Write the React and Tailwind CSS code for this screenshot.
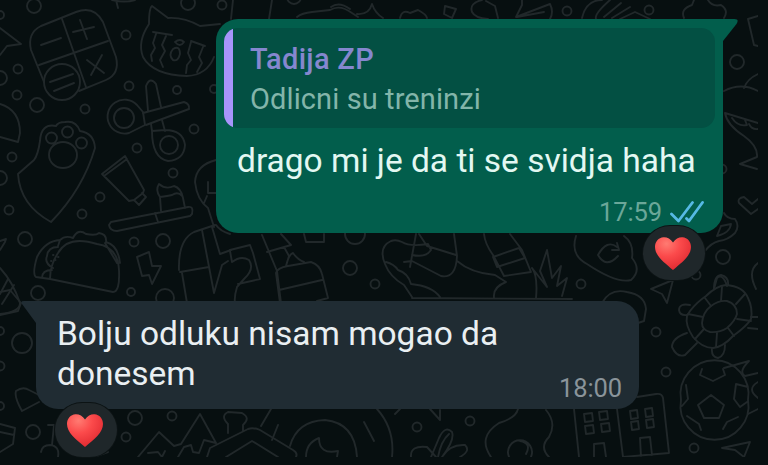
const DOTS = [
  [34, 6, 7], [0, 15, 4], [126, 35, 4.5], [188, 3, 7], [18, 69, 4.5], [0, 78, 7],
  [17, 95, 4.5], [37, 105, 7], [85, 109, 4.5], [129, 86, 4.5], [177, 90, 4], [194, 129, 4.5],
  [137, 148, 4.5], [214, 89, 4], [12, 157, 4.5], [0, 178, 7], [100, 197, 4.5], [9, 210, 4.5],
  [82, 214, 4.5], [173, 173, 4.5], [25, 239, 7], [134, 242, 4.5], [163, 241, 7], [38, 293, 7],
  [131, 292, 4], [165, 298, 9], [22, 343, 10], [0, 331, 4], [0, 366, 4.5], [0, 406, 4],
  [33, 432, 7], [135, 418, 7], [172, 416, 4.5], [126, 437, 4.5], [222, 5, 4.5], [294, -3, 7],
  [567, 11, 4.5], [649, 10, 4.5], [737, 62, 7], [355, 234, 10], [350, 268, 7], [375, 284, 4.5],
  [581, 284, 4.5], [723, 257, 7], [696, 275, 4.5], [656, 332, 4.5],
  [666, 372, 4.5], [694, 448, 4.5], [470, 421, 4.5], [417, 427, 4.5], [722, 169, 4.5],
];

const DOODLES = [
  // calculator
  "M41 26L76 12Q94 5 103 22L116 57Q120 74 106 80L79 91M44 82L31 50Q27 33 41 26M62 19L86 87M39 65L108 41M41 45L61 38M73 32L94 27M80 20L87 39M87 60L104 73M102 55L91 75",
  "M44 82A18 18 0 1 0 80 82A18 18 0 1 0 44 82M50 82L73 74M54 91L74 83",
  // cat
  "M220 24L200 26Q184 17 168 18L152 6Q149 8 149 24Q137 42 143 57Q153 75 187 76Q207 75 214 57M153 32L172 35M156 34L153 43L155 48L151 55L152 61M166 36L162 45L165 51L160 60L163 67M191 41L205 46M191 42L188 53L191 60L187 65L186 73M203 47L199 57L202 63L197 72M175 42Q180 38 184 42Q180 48 175 42M173 49Q180 45 180 54Q178 62 173 60Q168 55 173 49",
  // scissors
  "M143 112L145 125L129 133A17 17 0 1 1 137 105ZM114 118A10 10 0 1 0 134 118A10 10 0 1 0 114 118",
  "M143 113L184 102Q190 104 189 109L146 125M148 111L146 86Q150 76 156 84L161 107M151 124L152 131M162 120L165 131M152 131L165 130Q183 130 185 145Q184 160 168 161Q152 158 152 131M160 145A9 9 0 1 0 178 145A9 9 0 1 0 160 145",
  // paw
  "M34 160L18 174Q20 205 51 222Q83 189 95 148Q94 133 80 131Q76 120 65 122Q58 122 56 126Q41 123 40 141Q38 155 34 160M46 138A5 5 0 1 0 57 138A5 5 0 1 0 46 138M62 132A5.500 5.500 0 1 0 73 132A5.500 5.500 0 1 0 62 132M76 143A5.500 5.500 0 1 0 87 143A5.500 5.500 0 1 0 76 143M49 155A14 13 0 1 0 77 155A14 13 0 1 0 49 155",
  "M0 28L21 44L7 46L0 55M0 104Q20 110 20 133L18 142L0 137",
  // toothpaste and brush
  "M102 174L125 156L144 190L143 193L134 200L129 201Z M104 176L127 159M134 200L139 205L146 197L142 193M111 222L188 207Q194 206 192 214L190 216L117 231Q110 231 109 225Z M155 213L158 222M161 211L160 197Q155 190 159 184Q166 190 174 186Q181 188 183 198L185 208M160 197Q168 196 172 195Q178 191 182 196",
  // taco
  "M50 279L113 292Q120 292 119 270Q118 247 97 244Q68 235 58 253Q50 265 50 279L36 277Q32 274 37 257Q45 241 60 240Q65 235 73 238Q78 228 86 234Q96 236 99 233Q107 234 106 242Q118 245 120 263M60 240L58 246M105 243L117 263M58 247Q48 247 47 256Q44 263 53 268M42 278Q42 270 52 270",
  "M53 255h.5M55 260h.5M58 257h.5M51 261h.5",
  // lightning
  "M137 257L149 252L152 266L161 266L152 284L149 275L142 276Z",
  "M0 241L6 239L5 242L0 250M0 268Q13 282 20 303Q20 312 0 314M0 294L8 279M2 304L14 285",
  // popsicle and drinks
  "M216 160Q196 165 195 182Q197 200 208 208L214 227M208 182L208 193L216 193M204 203L207 196M179 270Q178 240 194 232L215 225M180 272L209 267M182 273L187 303M202 230L214 293L222 265L228 261M212 227L220 254L231 250",
  "M216 225Q220 231 230 234M230 250L250 245L253 253L260 279L238 284M230 251L232 262Q241 255 249 260Q255 269 244 279L237 287Q234 297 235 303M262 235L277 271L281 303M281 234L291 245L267 252M284 247L289 256L286 266M280 303L276 273Q277 268 288 266L311 262Q320 265 322 274L328 298L317 301M279 290L322 280M286 266Q289 254 293 253Q298 260 304 262M304 234L306 242L324 242L324 234",
  // sneaker
  "M412 297L404 285Q390 277 385 264Q378 247 391 241Q396 239 402 242Q410 247 428 244L431 250Q426 258 412 255M416 234L410 267M404 262L412 261L441 276Q456 279 457 256L454 234M419 234L427 246L456 255M386 262Q394 264 398 270Q408 273 411 284Q432 286 440 297M457 261Q471 273 495 275L506 282Q493 287 494 297M412 298L572 299",
  "M484 234Q485 244 493 255L504 276L531 272L522 250L510 234M493 257L519 248L525 258L497 267Z M536 298Q538 276 532 268L547 287L540 271L547 250L552 278L561 266L557 286L567 278L562 296",
  // cloud
  "M576 236Q570 255 587 264Q617 284 631 280Q642 270 632 258Q634 243 624 236M617 247Q607 239 598 255Q606 269 618 256M612 250L619 250L617 243",
  "M602 303Q610 288 627 292Q645 295 646 309L644 321L638 323",
  // top edge
  "M233 0L231 19M269 19L272 0M297 17Q302 13 312 12L330 10Q340 4 352 13L358 17M331 7Q339 1 350 9M357 14Q369 15 372 4Q375 13 383 18M400 18Q402 9 410 13L418 10Q426 14 427 18M445 6L456 9L452 18L444 14Z M482 0Q469 3 472 12Q475 18 488 19M116 0L118 8M112 0Q125 3 135 0",
  "M486 1L495 6L498 18M522 0L522 5L516 17L550 4Q554 12 550 19M517 17L544 12M582 18Q586 0 602 0M596 19Q594 14 610 0M604 17L621 3M612 18L630 7M620 19L635 12L650 19M684 18Q680 9 692 5L694 0M708 0Q712 7 721 5Q729 10 724 18",
  // right edge
  "M758 16L748 19L754 45L758 46M758 74Q747 79 744 88M724 91Q741 82 758 91M725 113L758 123M725 113Q727 125 744 136Q758 146 757 157L740 164L757 169M732 118Q738 127 747 125L745 120M749 124Q752 130 758 129M758 199L752 204L744 197Q737 198 739 203L751 214L758 209M724 213Q727 219 735 219Q740 226 735 233Q728 240 719 241Q711 243 705 251M717 236L721 226L731 224Q730 233 717 236M714 289L717 278Q723 273 727 286M758 263Q747 271 756 289",
  // paper plane
  "M651 289L673 280L667 303L662 294Z",
  // turtle
  "M690 311Q697 302 706 296Q716 286 726 285Q743 286 748 298Q753 308 751 319Q747 326 733 336Q723 347 713 348Q702 348 693 337Q685 325 687 316Z M702 323Q703 312 711 306Q719 300 727 301Q737 304 737 314Q735 321 727 328Q719 333 710 332Q702 330 702 323",
  "M722 287L721 301M705 298L711 306M745 294L736 304M737 319L751 321M728 328L734 336M717 333L716 347M704 329L695 339M688 314L703 317M714 289Q714 276 721 275Q729 277 728 285M690 305Q679 303 679 310Q680 316 687 315M687 333Q672 338 672 347Q677 358 685 355L697 343M712 348Q711 357 718 358Q725 356 725 345M751 317L758 317M748 328L758 329",
  // football
  "M681 400A34 34 0 1 0 748 400A34 34 0 1 0 681 400M711 395L724 405L719 418L704 418L698 405Z M702 369L700 375L713 381L725 375L723 369M748 387L736 384L734 399L740 407L747 402M686 385L688 399L682 406M687 416L699 424L701 430M723 429L727 422L738 417",
  "M724 368L749 361Q738 372 745 376L758 373M758 382Q746 389 758 398M748 414L758 409M722 448L750 442L744 457L735 450Z",
  // buildings
  "M574 409L579 457M617 409L623 457L669 453L663 398Q662 393 656 394L637 397M594 457L594 444L604 443L606 457M641 457L640 438L650 437L652 455M584 414l8-1 1 8-8 1zM599 412l8-1 1 8-8 1zM585 426l8-1 1 8-8 1zM601 424l8-1 1 8-8 1zM630 411l7-1 1 8-7 1zM645 409l7-1 1 8-7 1zM631 422l7-1 1 8-7 1zM646 420l7-1 1 8-7 1z",
  // bottom edge
  "M0 292L10 290L21 303L18 311L0 315M16 391Q23 386 29 390L39 395M16 391Q14 397 22 411L39 402M0 424L15 428L13 444L0 452M0 432L14 435M48 425L54 425L52 445M41 452Q42 445 50 445Q60 446 58 457M94 457L108 452",
  "M138 457L159 432L174 446L181 444L200 414L216 443L204 440L199 453L193 452L191 445L184 447L178 457M148 453L158 452L162 457L165 451M207 457L210 448L248 429Q253 427 260 430L293 450Q298 453 296 457M226 457L252 441L278 457M228 433L228 424Q220 416 228 412L242 413Q251 418 243 425L243 431",
  "M290 446Q297 421 325 420Q355 423 357 457M306 457Q306 443 319 438Q319 455 338 451L337 457M261 426L271 409M272 440L278 425M364 422L374 441M377 409Q395 429 392 457M395 414L400 409M430 409L440 420L440 410M411 457Q410 445 427 447L436 457M438 457Q441 441 449 434M518 409Q516 418 499 423Q477 437 491 457M546 410Q557 423 549 437Q539 447 549 457M509 457A12 12 0 1 1 531 457M520 441Q532 443 526 454M431 457L439 438Q445 425 452 432Q455 440 442 457Q450 444 465 445Q471 451 460 457",
];

function Doodles() {
  return (
    <svg
      className="absolute inset-0"
      width="758"
      height="457"
      viewBox="0 0 758 457"
      fill="none"
      stroke="#21282a"
      strokeWidth="1.9"
      strokeLinecap="round"
      strokeLinejoin="round"
      aria-hidden="true"
    >
      {DOTS.map(([cx, cy, r], i) => (
        <circle key={i} cx={cx} cy={cy} r={r} />
      ))}
      {DOODLES.map((d) => (
        <path key={d} d={d} />
      ))}
    </svg>
  );
}

function Heart({ id }) {
  return (
    <svg className="-ml-[3px]" width="38" height="35" viewBox="0 0 38 35" aria-hidden="true">
      <defs>
        <radialGradient id={id} cx="0.32" cy="0.2" r="0.85">
          <stop offset="0" stopColor="#ff7b72" />
          <stop offset="0.45" stopColor="#fb4a4b" />
          <stop offset="1" stopColor="#df2930" />
        </radialGradient>
      </defs>
      <path
        fill={`url(#${id})`}
        d="M19 6.500C16.500 2.500 13 1 9.500 1.200C4.500 1.600 1 5.500 1 11C1 19.500 9.500 26 19 34C28.500 26 37 19.500 37 11C37 5.500 33.500 1.600 28.500 1.200C25 1 21.500 2.500 19 6.500Z"
      />
    </svg>
  );
}

function Reaction({ id, className }) {
  return (
    <div
      className={`absolute flex h-[54px] w-[62px] items-center justify-center rounded-[27px] bg-[#1f272a] ring-1 ring-[#0c1314] ${className}`}
    >
      <Heart id={id} />
    </div>
  );
}

function ReadTicks() {
  return (
    <svg
      width="34"
      height="22"
      viewBox="0 0 34 22"
      fill="none"
      stroke="#56b9e4"
      strokeWidth="2.8"
      strokeLinecap="round"
      strokeLinejoin="round"
      aria-hidden="true"
    >
      <path d="M1.500 13L8.500 20L22.500 1.500M16.500 17.500L19 20L32.500 1.500" />
    </svg>
  );
}

export default function App() {
  return (
    <div className="relative h-[465px] w-[768px] overflow-hidden bg-[#070f10] font-[Roboto,sans-serif]">
      <Doodles />
      <div className="relative flex h-full flex-col pt-[19px]">
        <div className="relative mr-[45px] h-[214px] w-[507px] self-end rounded-[22px] rounded-tr-none bg-[#025e4c] px-2 pt-[9px]">
          <svg className="absolute top-0 left-[506px]" width="16" height="22" viewBox="0 0 16 22" aria-hidden="true">
            <path fill="#025e4c" d="M0 0H12.500Q17.500 0 14.500 5L1 22H0Z" />
          </svg>
          <div className="flex h-[100px] overflow-hidden rounded-[14px] bg-[#035043]">
            <div className="w-[9px] bg-[#a795fb]" />
            <div className="pt-[11px] pl-[17px] whitespace-nowrap">
              <p className="text-[29px] leading-10 font-medium tracking-[0.3px] text-[#8587cf]">Tadija ZP</p>
              <p className="text-[29px] leading-10 tracking-[0.1px] text-[#83b5aa]">Odlicni su treninzi</p>
            </div>
          </div>
          <p className="pt-[13px] pl-[13px] text-[33.5px] leading-10 whitespace-nowrap text-[#e3f8f2]">
            drago mi je da ti se svidja haha
          </p>
          <div className="flex items-center justify-end gap-2 pt-[18px] pr-[11px]">
            <span className="pt-px text-[25.5px] leading-6 tracking-[-0.1px] text-[#6ba799]">17:59</span>
            <ReadTicks />
          </div>
          <Reaction id="heart-sent" className="top-[207px] left-[427px]" />
        </div>

        <div className="relative mt-[68px] ml-[36px] flex h-[108px] w-[603px] justify-between rounded-[22px] rounded-tl-none bg-[#202c33] pr-[17px] pl-[21px]">
          <svg className="absolute top-0 -left-[15px]" width="16" height="22" viewBox="0 0 16 22" aria-hidden="true">
            <path fill="#202c33" d="M16 0H3Q-1 0 1 3L15 22H16Z" />
          </svg>
          <p className="pt-[13px] text-[33.5px] leading-10 whitespace-nowrap text-[#e9eff2]">
            Bolju odluku nisam mogao da
            <br />
            donesem
          </p>
          <span className="self-end pb-[9px] text-[25.5px] leading-6 tracking-[-0.1px] text-[#8a949a]">18:00</span>
          <Reaction id="heart-received" className="top-[102px] left-[19px]" />
        </div>
      </div>
    </div>
  );
}
